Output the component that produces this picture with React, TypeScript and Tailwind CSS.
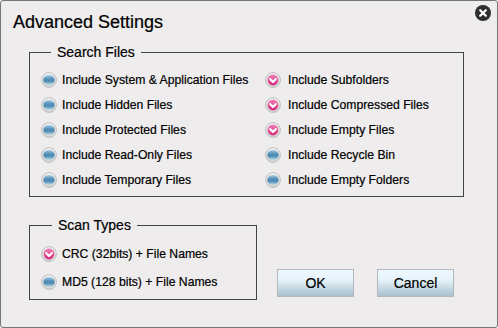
import React from "react";

function Radio({ checked, id }: { checked: boolean; id: string }) {
  return (
    <svg width="16" height="16" viewBox="0 0 16 16" className="shrink-0">
      <defs>
        <linearGradient id={`ring-${id}`} x1="0" y1="0" x2="0" y2="1">
          <stop offset="0" stopColor="#f2f2f2" />
          <stop offset="1" stopColor="#d2d2d2" />
        </linearGradient>
        <linearGradient id={`blue-${id}`} x1="0" y1="0" x2="0" y2="1">
          <stop offset="0" stopColor="#a9d0e6" />
          <stop offset="0.35" stopColor="#5a96bc" />
          <stop offset="0.6" stopColor="#4a86ae" />
          <stop offset="1" stopColor="#bfe0f1" />
        </linearGradient>
        <linearGradient id={`pink-${id}`} x1="0" y1="0" x2="0" y2="1">
          <stop offset="0" stopColor="#f27fb6" />
          <stop offset="1" stopColor="#d42a7c" />
        </linearGradient>
      </defs>
      <circle cx="8" cy="8" r="7.4" fill={`url(#ring-${id})`} stroke="#bdbdbd" strokeWidth="1" />
      {checked ? (
        <>
          <circle cx="8" cy="8" r="5.4" fill={`url(#pink-${id})`} />
          <polyline points="5.1,7 8,10 10.9,7" fill="none" stroke="#ffffff" strokeWidth="2" strokeLinecap="round" strokeLinejoin="round" />
        </>
      ) : (
        <ellipse cx="8" cy="8" rx="5.7" ry="5" fill={`url(#blue-${id})`} />
      )}
    </svg>
  );
}

function Opt({ label, checked, id, gap = "ml-[5px]" }: { label: string; checked: boolean; id: string; gap?: string }) {
  return (
    <div className="flex items-center h-[25px]">
      <Radio checked={checked} id={id} />
      <span className={`${gap} text-[12.2px] leading-[14px] text-black whitespace-nowrap`}>{label}</span>
    </div>
  );
}

export default function App() {
  return (
    <div className="relative w-[498px] h-[328px] bg-[#eeeced] border border-[#767676] rounded-[3px] font-['Liberation_Sans',Arial,sans-serif] text-black overflow-hidden [-webkit-text-stroke:0.2px_#000]">
      <div className="pt-[10px] pl-[12px] text-[18px] leading-[22px]">Advanced Settings</div>

      <button className="absolute top-[4px] right-[6px] w-[16px] h-[16px]" aria-label="Close">
        <svg width="16" height="16" viewBox="0 0 16 16">
          <circle cx="8" cy="8" r="8" fill="#2f2f2f" />
          <path d="M5.2 5.2 L10.8 10.8 M10.8 5.2 L5.2 10.8" stroke="#ffffff" strokeWidth="2.2" strokeLinecap="round" />
        </svg>
      </button>

      <fieldset className="mt-[12px] ml-[28px] w-[435px] border border-[#444] pb-[4px]">
        <legend className="ml-[21px] px-[6px] text-[14px] leading-[15px]">Search Files</legend>
        <div className="flex pt-[7px] pl-[11px]">
          <div className="flex flex-col w-[224px]">
            <Opt id="a1" checked={false} label="Include System & Application Files" />
            <Opt id="a2" checked={false} label="Include Hidden Files" />
            <Opt id="a3" checked={false} label="Include Protected Files" />
            <Opt id="a4" checked={false} label="Include Read-Only Files" />
            <Opt id="a5" checked={false} label="Include Temporary Files" />
          </div>
          <div className="flex flex-col">
            <Opt id="b1" checked={true} gap="ml-[7px]" label="Include Subfolders" />
            <Opt id="b2" checked={true} gap="ml-[7px]" label="Include Compressed Files" />
            <Opt id="b3" checked={true} gap="ml-[7px]" label="Include Empty Files" />
            <Opt id="b4" checked={false} gap="ml-[7px]" label="Include Recycle Bin" />
            <Opt id="b5" checked={false} gap="ml-[7px]" label="Include Empty Folders" />
          </div>
        </div>
      </fieldset>

      <div className="flex items-start mt-[21px] ml-[28px]">
        <fieldset className="w-[228px] border border-[#444] pb-[3px]">
          <legend className="ml-[22px] px-[6px] text-[14px] leading-[15px]">Scan Types</legend>
          <div className="flex flex-col pt-[7px] pl-[11px]">
            <div className="flex items-center h-[28px]">
              <Radio checked={true} id="c1" />
              <span className="ml-[5px] text-[12.2px] leading-[14px] whitespace-nowrap">CRC (32bits) + File Names</span>
            </div>
            <div className="flex items-center h-[28px]">
              <Radio checked={false} id="c2" />
              <span className="ml-[5px] text-[12.2px] leading-[14px] whitespace-nowrap">MD5 (128 bits) + File Names</span>
            </div>
          </div>
        </fieldset>

        <div className="flex gap-[23px] ml-[20px] mt-[51px]">
          <button className="w-[77px] h-[28px] border border-[#b4b8ba] bg-[linear-gradient(to_bottom,#eef9fe_0%,#e6f3fa_38%,#a8c0cd_100%)] text-[14px] leading-[16px] text-black">
            OK
          </button>
          <button className="w-[77px] h-[28px] border border-[#b4b8ba] bg-[linear-gradient(to_bottom,#eef9fe_0%,#e6f3fa_38%,#a8c0cd_100%)] text-[14px] leading-[16px] text-black">
            Cancel
          </button>
        </div>
      </div>
    </div>
  );
}
